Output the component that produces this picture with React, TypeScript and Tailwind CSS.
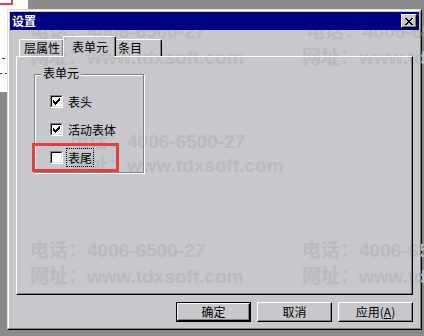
import React from "react";

function Check() {
  return (
    <svg width="7" height="7" viewBox="0 0 7 7" shapeRendering="crispEdges">
      <path
        d="M6 0h1v1h-1z M5 1h2v1h-2z M0 2h1v1h-1z M4 2h3v1h-3z M0 3h2v1h-2z M3 3h3v1h-3z M0 4h5v1h-5z M1 5h3v1h-3z M2 6h1v1h-1z"
        fill="#000"
      />
    </svg>
  );
}

function CloseX() {
  return (
    <svg width="8" height="7" viewBox="0 0 8 7" shapeRendering="crispEdges">
      <path
        d="M0 0h2v1h-2z M6 0h2v1h-2z M1 1h2v1h-2z M5 1h2v1h-2z M2 2h4v1h-4z M3 3h2v1h-2z M2 4h4v1h-4z M1 5h2v1h-2z M5 5h2v1h-2z M0 6h2v1h-2z M6 6h2v1h-2z"
        fill="#000"
      />
    </svg>
  );
}

function CheckBox({ checked }: { checked: boolean }) {
  return (
    <div className="w-[13px] h-[13px] shrink-0 border border-t-[#808080] border-l-[#808080] border-r-white border-b-white">
      <div className="w-full h-full border border-t-black border-l-black border-r-[#dfdfdf] border-b-[#dfdfdf] bg-white flex items-center justify-center">
        {checked && <Check />}
      </div>
    </div>
  );
}

function Row({ label, checked, focus }: { label: string; checked: boolean; focus?: boolean }) {
  return (
    <div className="flex items-center h-[19px]">
      <CheckBox checked={checked} />
      <span
        className={
          focus
            ? "ml-[3px] h-[19px] px-px border border-dotted border-black flex items-center leading-none"
            : "ml-[3px] h-[19px] px-px border border-transparent flex items-center leading-none"
        }
      >
        {label}
      </span>
    </div>
  );
}

function Btn({ children, def }: { children: React.ReactNode; def?: boolean }) {
  const inner =
    "w-full h-full border border-t-white border-l-white border-r-black border-b-black shadow-[inset_-1px_-1px_0_#808080] flex items-center justify-center text-[12px] leading-none text-black";
  if (def) {
    return (
      <div className="w-[75px] h-[20px] border border-black">
        <div className={inner}>{children}</div>
      </div>
    );
  }
  return (
    <div className="w-[75px] h-[20px]">
      <div className={inner}>{children}</div>
    </div>
  );
}

const wm =
  "absolute whitespace-nowrap text-[19px] font-bold leading-none text-[#bbbabe] font-['Liberation_Sans','Noto_Sans_CJK_SC',sans-serif]";

export default function App() {
  return (
    <div className="relative w-[424px] h-[336px] overflow-hidden bg-[#8a8a8a] font-['Noto_Sans_CJK_SC',sans-serif] text-black">
      {/* background screen fragments */}
      <div className="absolute left-0 top-0 w-[28px] h-[9px] bg-white" />
      <div className="absolute left-0 top-0 w-[7px] h-[92px] bg-white" />
      <div className="absolute left-0 top-[3px] w-[13px] h-[2px] bg-[#e0413f]" />
      <div className="absolute left-[11px] top-0 w-[2px] h-[5px] bg-[#e0413f]" />
      <div className="absolute left-[2px] top-[58px] w-[3px] h-px bg-[#333]" />
      <div className="absolute left-0 top-[73px] w-[2px] h-px bg-[#333]" />
      <div className="absolute left-[5px] top-[73px] w-[2px] h-px bg-[#333]" />

      {/* dialog */}
      <div className="absolute left-[7px] top-[9px] w-[415px] h-[321px] isolate flex flex-col border border-t-[#dfdfdf] border-l-[#dfdfdf] border-r-black border-b-black bg-[#c8c7cb]">
        {/* watermark */}
        <div className={`${wm} -z-10 left-[22px] top-[12px]`}>电话：4006-6500-27</div>
        <div className={`${wm} -z-10 left-[22px] top-[38px]`}>网址：www.tdxsoft.com</div>
        <div className={`${wm} -z-10 left-[298px] top-[12px]`}>电话：4006-6500-27</div>
        <div className={`${wm} -z-10 left-[294px] top-[38px]`}>网址：www.tdxsoft.com</div>
        <div className={`${wm} -z-10 left-[62px] top-[122px]`}>电话：4006-6500-27</div>
        <div className={`${wm} -z-10 left-[62px] top-[146px]`}>网址：www.tdxsoft.com</div>
        <div className={`${wm} -z-10 left-[22px] top-[231px]`}>电话：4006-6500-27</div>
        <div className={`${wm} -z-10 left-[22px] top-[257px]`}>网址：www.tdxsoft.com</div>
        <div className={`${wm} -z-10 left-[294px] top-[231px]`}>电话：4006-6500-27</div>
        <div className={`${wm} -z-10 left-[294px] top-[257px]`}>网址：www.tdxsoft.com</div>

        <div className="flex-1 flex flex-col border border-t-white border-l-white border-r-[#808080] border-b-[#808080] p-px min-h-0">
          {/* title bar */}
          <div className="h-[18px] shrink-0 bg-[#000080] flex items-center justify-between pl-[2px] pr-[2px]">
            <span className="text-white font-bold text-[12px] leading-none">设置</span>
            <div className="w-[16px] h-[14px] bg-[#c8c7cb] border border-t-white border-l-white border-r-black border-b-black shadow-[inset_-1px_-1px_0_#808080] flex items-center justify-center">
              <CloseX />
            </div>
          </div>

          {/* tabs */}
          <div className="mt-[6px] mx-[6px] flex items-end h-[20px] shrink-0 text-[12px] leading-none">
            <div className="ml-[3px] w-[45px] h-[17px] border-l border-t border-r border-l-white border-t-white border-r-black shadow-[inset_-1px_0_0_#808080] rounded-t-[2px] pl-[4px] flex items-center">
              层属性
            </div>
            <div className="relative z-10 -ml-[1px] w-[53px] h-[20px] border-l border-t border-r border-l-white border-t-white border-r-black shadow-[inset_-1px_0_0_#808080] rounded-t-[2px] pl-[8px] flex items-center">
              表单元
              <div className="absolute left-0 right-[1px] -bottom-[1px] h-px bg-[#c8c7cb]" />
            </div>
            <div className="w-[46px] h-[17px] border-t border-r border-t-white border-r-black shadow-[inset_-1px_0_0_#808080] rounded-tr-[2px] pl-[2px] flex items-center">
              条目
            </div>
          </div>

          {/* panel */}
          <div className="mx-[6px] h-[239px] shrink-0 border border-t-white border-l-white border-r-black border-b-black shadow-[inset_-1px_-1px_0_#808080]">
            <div className="ml-[17px] mt-[17px] w-[110px] h-[99px] relative border border-[#808080] shadow-[1px_1px_0_0_#fff,inset_1px_1px_0_0_#fff] text-[12px]">
              <div className="absolute left-[6px] top-[-9px] h-[14px] px-[2px] bg-[#c8c7cb] flex items-center leading-none">
                表单元
              </div>
              <div className="pl-[15px] pt-[17px] flex flex-col gap-[9px]">
                <Row label="表头" checked />
                <Row label="活动表体" checked />
                <Row label="表尾" checked={false} focus />
              </div>
            </div>
          </div>

          {/* buttons */}
          <div className="mt-[7px] mx-[6px] flex justify-end gap-[6px] h-[20px] shrink-0">
            <Btn def>确定</Btn>
            <Btn>取消</Btn>
            <Btn>
              应用(<span className="underline">A</span>)
            </Btn>
          </div>
        </div>
      </div>

      {/* red annotation box */}
      <div className="absolute left-[32px] top-[143px] w-[87px] h-[29px] border-[3px] border-[#e0413f]" />
    </div>
  );
}
